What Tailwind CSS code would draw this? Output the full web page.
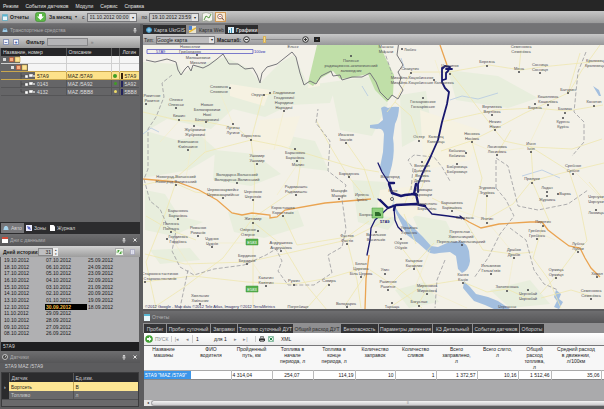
<!DOCTYPE html>
<html lang="ru">
<head>
  <meta charset="utf-8">
  <meta name="viewport" content="width=device-width, initial-scale=1">
  <title>Мониторинг транспорта</title>
  <script src="https://cdn.jsdelivr.net/npm/@tailwindcss/browser@4"></script>
</head>
<body class="h-screen flex flex-col overflow-hidden bg-[#5c5c5e] font-['Liberation_Sans',sans-serif] text-[5px] leading-[6px] text-[#1c1c1c]">
  <!-- Main menu -->
  <nav class="h-[11px] shrink-0 flex items-center gap-[7px] pl-[3px] bg-[#262626] text-[#e4e4e4]">
    <a href="#">Режим</a>
    <a href="#">События датчиков</a>
    <a href="#">Модули</a>
    <a href="#">Сервис</a>
    <a href="#">Справка</a>
  </nav>
  <!-- Report toolbar -->
  <div class="h-[13px] shrink-0 flex items-center bg-linear-to-b from-[#c6c6c6] to-[#9b9b9b] border-b border-[#77777a]">
    <div class="w-[227px] h-full flex items-center pl-[2px] bg-linear-to-b from-[#d2d2d2] to-[#9d9d9d]">
      <button class="flex items-center gap-[2px] w-[33px] font-bold">
        <svg class="w-[6px] h-[7px]" viewBox="0 0 6 7"><path fill="#e9f7fb" stroke="#4ba3bd" stroke-width=".7" d="M.5.5h5v6h-5z"/><path fill="#59b7d3" d="M1 1h4v1.500H1z"/></svg>
        Отчеты
      </button>
      <button class="flex items-center gap-[3px] w-[40px] font-bold whitespace-nowrap">
        <svg class="w-[11px] h-[10px]" viewBox="0 0 11 10"><rect x=".5" y=".5" width="10" height="9" rx="2" fill="#5cb846" stroke="#3d8a2f" stroke-width=".6"/><path fill="#fff" d="M4 2h3v2.500h2L5.500 8 2 4.500h2z"/></svg>
        За месяц
      </button>
      <span class="w-[7px] text-[4px]">▾</span>
      <label class="flex items-center gap-[2px]">с
        <span class="flex h-[9px] w-[50px] border border-[#77777a] bg-[#c6c6c6]">
          <input type="text" value="01.10.2012 00:00" class="w-full min-w-0 pl-[2px]">
          <button class="w-[6px] shrink-0 bg-[#e4e4e4] text-[4px] leading-[7px]">▾</button>
        </span>
      </label>
      <label class="flex items-center gap-[2px] pl-[5px]">по
        <span class="flex h-[9px] w-[50px] border border-[#77777a] bg-[#c6c6c6]">
          <input type="text" value="19.10.2012 23:59" class="w-full min-w-0 pl-[2px]">
          <button class="w-[6px] shrink-0 bg-[#e4e4e4] text-[4px] leading-[7px]">▾</button>
        </span>
      </label>
      <button class="ml-[3px] shrink-0" aria-label="Маршрут">
        <svg class="w-[11px] h-[10px]" viewBox="0 0 11 10"><path fill="#f4f4ee" stroke="#88957b" stroke-width=".5" d="M.5 1.500 4 .5l3.500 1 3-1v8l-3 1-3.500-1-3.500 1z"/><path fill="none" stroke="#5a9b48" d="m2 8 2-4 3 2 2-4"/></svg>
      </button>
      <button class="ml-[2px] shrink-0 border border-[#d09a58] bg-[#f8e8cf]" aria-label="Поиск">
        <svg class="w-[9px] h-[8px]" viewBox="0 0 9 8"><circle cx="4" cy="3.500" r="2.300" fill="#fff" stroke="#704337" stroke-width=".7"/><path stroke="#704337" d="m6 5 2 2.500"/><path stroke="#d0463a" stroke-width=".7" d="M3 3.500h2"/></svg>
      </button>
    </div>
  </div>

  <main class="flex-1 min-h-0 flex gap-[3px]">
    <!-- Left dock -->
    <aside class="w-[140px] shrink-0 flex flex-col">
      <section class="flex-1 min-h-0 flex flex-col">
        <header class="h-[12px] shrink-0 flex items-center gap-[2px] px-[2px] bg-linear-to-b from-[#6e6e70] to-[#565658] text-[#aeaeb0]">
          <svg class="w-[6px] h-[6px]" viewBox="0 0 6 6"><path fill="#9ecbe6" d="M1 2.500 2 1h2l1 1.500.6 2.500H.4z"/><path fill="#33526b" d="M1.500 2.500 2 1.600h2l.5.900z"/></svg>
          <h2 class="flex-1">Транспортные средства</h2>
          <svg class="w-[4px] h-[5px] mr-px" viewBox="0 0 4 5"><path stroke="#e5e5e5" stroke-width=".8" fill="none" d="M1 .5h2M1.300.5v2M2.700.5v2M.5 2.800h3M2 3v2"/></svg>
        </header>
        <div class="h-[12px] shrink-0 flex items-center gap-[3px] pl-[3px] bg-linear-to-b from-[#cecece] to-[#999]">
          <button class="w-[6px] h-[6px] border border-[#8893b4] bg-[#eef1fa] text-[#253a8e] leading-[3px] font-bold">−</button>
          <button class="w-[6px] h-[6px] ml-px border border-[#8893b4] bg-[#eef1fa] text-[#253a8e] leading-[3px] font-bold">+</button>
          <label for="filter" class="pl-[4px] -mr-px font-bold">Фильтр</label>
          <input id="filter" type="text" class="w-[41px] h-[8px] border border-[#88888a] bg-[#b5b5b7]">
          <span class="text-[#77777a]">»</span>
        </div>
        <div class="flex-1 min-h-0 pl-px pr-px bg-[#656567]">
          <table class="w-full table-fixed border-collapse text-[#dededf]">
            <colgroup><col class="w-[65px]"><col class="w-[45px]"><col class="w-[8px]"><col></colgroup>
            <thead>
              <tr class="h-[8px] bg-[#262628] text-left text-[#dedede]">
                <th class="p-0 pl-[2px] font-normal border-r border-[#555]">Название, номер</th>
                <th class="p-0 pl-[2px] font-normal border-r border-[#555]">Описание</th>
                <th class="p-0 border-r border-[#555]"></th>
                <th class="p-0 pl-[3px] font-normal">Логин</th>
              </tr>
            </thead>
            <tbody>
              <tr class="h-[7px] bg-[#f5f5f5] border-b border-[#cfcfcf]">
                <td class="p-0 bg-linear-to-r from-[#656567] from-30% to-[#f5f5f5] to-30%">
                  <svg class="block w-[22px] h-[7px]" viewBox="0 0 22 7"><path fill="#ddd" d="M2 2h3v3H2z"/><path fill="#f4b083" stroke="#c44d26" stroke-width=".6" d="M8.500 1.500h4v4h-4z"/><path fill="#fbe49a" stroke="#b98d29" stroke-width=".5" d="M14 1h5v5h-5z"/></svg>
                </td>
                <td class="p-0 border-l border-[#cfcfcf]"></td><td class="p-0 border-x border-[#cfcfcf]"></td><td class="p-0"></td>
              </tr>
              <tr class="h-[8px] bg-[#f5f5f5]">
                <td class="p-0 bg-linear-to-r from-[#656567] from-42% to-[#f5f5f5] to-42%">
                  <svg class="block w-[30px] h-[7px]" viewBox="0 0 30 7"><path fill="#ddd" d="M10 2h3v3h-3z"/><path fill="#f4b083" stroke="#c44d26" stroke-width=".6" d="M15.500 1.500h4v4h-4z"/><path fill="#fbe49a" stroke="#b98d29" stroke-width=".5" d="M21 1h5v5h-5z"/></svg>
                </td>
                <td class="p-0 border-l border-[#cfcfcf]"></td><td class="p-0 border-x border-[#cfcfcf]"></td><td class="p-0"></td>
              </tr>
              <tr class="h-[8px] bg-[#fde28a] text-[#29251a] border-y border-[#c9a74e]">
                <td class="p-0 bg-linear-to-r from-[#656567] from-53% to-[#fde28a] to-53%"><div class="flex items-center gap-[2px]">
                  <svg class="w-[34px] h-[6px]" viewBox="0 0 34 6"><path stroke="#3a3a3c" stroke-width=".6" d="M20 0v6m0-3h4"/><path fill="#fff" stroke="#555" stroke-width=".4" d="M24 2h3v3h-3zM28 1h4v3h-4z"/><path fill="#eee" stroke="#555" stroke-width=".4" d="M32 2h2v2h-2z"/></svg>57A9</div></td>
                <td class="p-0 pl-px border-l border-[#c9a74e]">MAZ /57A9</td>
                <td class="p-0 border-x border-[#c9a74e]"><i class="block size-[4px] mx-auto rounded-full bg-[#3f9d24]"></i></td>
                <td class="p-0 pl-px"><div class="flex items-center gap-[2px]"><i class="w-[2px] h-[6px] bg-[#372212]"></i>57A9</div></td>
              </tr>
              <tr class="h-[8px] border-b border-[#555557]">
                <td class="p-0"><div class="flex items-center gap-[2px]">
                  <svg class="w-[34px] h-[6px]" viewBox="0 0 34 6"><path stroke="#3a3a3c" stroke-width=".6" d="M20 0v6m0-3h4"/><path fill="#fff" stroke="#555" stroke-width=".4" d="M24 2h3v3h-3zM28 1h4v3h-4z"/><path fill="#eee" stroke="#555" stroke-width=".4" d="M32 2h2v2h-2z"/></svg>0143</div></td>
                <td class="p-0 pl-px border-l border-[#555557]">MAZ /5A92</td>
                <td class="p-0 border-x border-[#555557]"><i class="block size-[3px] mx-auto rounded-full bg-[#3f9d24]"></i></td>
                <td class="p-0 pl-px"><div class="flex items-center gap-[2px]"><i class="w-[2px] h-[6px] bg-[#23235c]"></i>5A92</div></td>
              </tr>
              <tr class="h-[8px] border-b border-[#555557]">
                <td class="p-0"><div class="flex items-center gap-[2px]">
                  <svg class="w-[34px] h-[6px]" viewBox="0 0 34 6"><path fill="none" stroke="#3a3a3c" stroke-width=".6" d="M20 0v3h4"/><path fill="#fff" stroke="#555" stroke-width=".4" d="M24 2h3v3h-3zM28 1h4v3h-4z"/><path fill="#eee" stroke="#555" stroke-width=".4" d="M32 2h2v2h-2z"/></svg>4132</div></td>
                <td class="p-0 pl-px border-l border-[#555557]">MAZ /5BB8</td>
                <td class="p-0 border-x border-[#555557]"><i class="block size-[3px] mx-auto rounded-full bg-[#eedb69]"></i></td>
                <td class="p-0 pl-px"><div class="flex items-center gap-[2px]"><i class="w-[2px] h-[6px] bg-[#23235c]"></i>5BB8</div></td>
              </tr>
            </tbody>
          </table>
        </div>
        <div class="h-[12px] shrink-0 flex items-center pl-px bg-[#2c2c2e] text-[#d5d5d5]">
          <button class="h-[10px] w-[23px] flex items-center gap-[2px] pl-[2px] bg-[#77777a]"><svg class="w-[6px] h-[6px]" viewBox="0 0 6 6"><path fill="#a8d4ec" d="M1 2.500 2 1h2l1 1.500.6 2.500H.4z"/></svg>Авто</button>
          <button class="h-[10px] w-[24px] flex items-center gap-[2px] pl-[2px]"><svg class="w-[6px] h-[6px]" viewBox="0 0 6 6"><path fill="#eef" d="M0 0h6v6H0z"/><path fill="#6470c4" d="m1 1 3 1 1 3-3-1z"/></svg>Зоны</button>
          <button class="h-[10px] flex items-center gap-[2px] pl-[2px]"><svg class="w-[5px] h-[6px]" viewBox="0 0 5 6"><path fill="#fff" d="M0 0h3.500L5 1.500V6H0z"/></svg>Журнал</button>
        </div>
      </section>

      <!-- Days with data -->
      <section class="shrink-0">
        <header class="h-[12px] flex items-center gap-[2px] px-[2px] bg-linear-to-b from-[#6e6e70] to-[#565658] text-[#aeaeb0]">
          <svg class="w-[6px] h-[6px]" viewBox="0 0 6 6"><path fill="#fff" d="M0 0h6v6H0z"/><path fill="#d14a38" d="M0 0h6v2H0z"/></svg>
          <h2 class="flex-1">Дни с данными</h2>
          <svg class="w-[4px] h-[5px] mr-[5px]" viewBox="0 0 4 5"><path stroke="#e5e5e5" stroke-width=".8" fill="none" d="M1 .5h2M1.300.5v2M2.700.5v2M.5 2.800h3M2 3v2"/></svg>
          <svg class="w-[4px] h-[4px] mr-px" viewBox="0 0 4 4"><path stroke="#e5e5e5" d="m.5.5 3 3m0-3-3 3"/></svg>
        </header>
        <div class="h-[11px] flex items-center pl-[3px] bg-linear-to-b from-[#d2d2d2] to-[#9d9d9d]">
          <label for="days" class="w-[35px] font-bold whitespace-nowrap">Дней истории:</label>
          <input id="days" type="text" value="31" class="w-[15px] h-[8px] border border-[#88888a] bg-[#bfbfc1] text-right pr-px">
          <span class="w-[5px] h-[8px] flex flex-col bg-[#eee] text-[3px] leading-[4px] text-center"><button class="h-[4px]">▴</button><button class="h-[4px]">▾</button></span>
          <button class="ml-auto mr-[5px] w-[9px] h-[8px] bg-[#eef5ea] border border-[#aaa]" aria-label="Обновить"><svg class="w-[7px] h-[6px]" viewBox="0 0 7 6"><path fill="none" stroke="#47a33a" stroke-width=".9" d="M.5 3h2V1M6.500 3h-2v2M1.500 2l1-1 1 1M3.500 4l1 1 1-1"/></svg></button>
          <button class="mr-[4px] w-[7px] h-[8px] grid place-items-center" aria-label="Сохранить"><svg class="w-[5px] h-[6px]" viewBox="0 0 5 6"><path fill="#f2f2f6" stroke="#8888ad" stroke-width=".5" d="M.5.500h4v5h-4z"/><path stroke="#6e76ad" stroke-width=".5" d="M1.500 2h2m-2 2h2"/></svg></button>
        </div>
        <div class="h-[85px] mx-px pl-[2px] bg-[#b0b0b2]">
          <ul class="grid grid-flow-col grid-rows-12 grid-cols-[42px_42px_42px] h-20">
            <li class="pl-px">19.10.2012</li><li class="pl-px">18.10.2012</li><li class="pl-px">17.10.2012</li><li class="pl-px">16.10.2012</li><li class="pl-px">15.10.2012</li><li class="pl-px">14.10.2012</li><li class="pl-px">13.10.2012</li><li class="pl-px">12.10.2012</li><li class="pl-px">11.10.2012</li><li class="pl-px">10.10.2012</li><li class="pl-px">09.10.2012</li><li class="pl-px">08.10.2012</li>
            <li class="pl-px">07.10.2012</li><li class="pl-px">06.10.2012</li><li class="pl-px">05.10.2012</li><li class="pl-px">04.10.2012</li><li class="pl-px">03.10.2012</li><li class="pl-px">02.10.2012</li><li class="pl-px">01.10.2012</li><li class="pl-px bg-black text-[#f3bd44] font-bold">30.09.2012</li><li class="pl-px">29.09.2012</li><li class="pl-px">28.09.2012</li><li class="pl-px">27.09.2012</li><li class="pl-px">26.09.2012</li>
            <li class="pl-px">25.09.2012</li><li class="pl-px">24.09.2012</li><li class="pl-px">23.09.2012</li><li class="pl-px">22.09.2012</li><li class="pl-px">21.09.2012</li><li class="pl-px">20.09.2012</li><li class="pl-px">19.09.2012</li><li class="pl-px">18.09.2012</li>
          </ul>
        </div>
        <div class="h-[9px] mx-px pl-[2px] bg-[#1e1e20] text-[#d5d5d5] leading-[9px]">57A9</div>
      </section>

      <!-- Sensors -->
      <section class="shrink-0 h-[58px] flex flex-col">
        <header class="h-[12px] shrink-0 flex items-center gap-[2px] px-[2px] bg-linear-to-b from-[#6e6e70] to-[#565658] text-[#aeaeb0]">
          <svg class="w-[6px] h-[6px]" viewBox="0 0 6 6"><circle cx="3" cy="3" r="2.500" fill="#444" stroke="#ddd" stroke-width=".8"/><path stroke="#eee" stroke-width=".7" d="m3 3.500 1-2"/></svg>
          <h2 class="flex-1">Датчики</h2>
          <svg class="w-[4px] h-[5px] mr-[5px]" viewBox="0 0 4 5"><path stroke="#e5e5e5" stroke-width=".8" fill="none" d="M1 .5h2M1.300.5v2M2.700.5v2M.5 2.800h3M2 3v2"/></svg>
          <svg class="w-[4px] h-[4px] mr-px" viewBox="0 0 4 4"><path stroke="#e5e5e5" d="m.5.5 3 3m0-3-3 3"/></svg>
        </header>
        <div class="h-[9px] shrink-0 pl-[5px] text-[#d0d0d2]">57A9 MAZ /57A9</div>
        <div class="flex-1 mx-px mb-[2px] border border-[#3b3b3d] bg-[#69696b]">
          <table class="w-full table-fixed border-collapse text-[#cbcbcd]">
            <colgroup><col class="w-[7px]"><col class="w-[64px]"><col></colgroup>
            <tr class="h-[9px] bg-[#2b2b2d] text-left"><th class="p-0 border-r border-[#555]"></th><th class="p-0 pl-[2px] font-normal border-r border-[#555]">Датчик</th><th class="p-0 pl-[2px] font-normal">Ед.изм.</th></tr>
            <tr class="h-[9px] bg-[#fde694] text-[#29251a]"><td class="p-0 pl-[2px] bg-[#2b2b2d] text-white">›</td><td class="p-0 pl-[2px] border-r border-[#c9a74e]">Бортсеть</td><td class="p-0 pl-[2px]">В</td></tr>
            <tr class="h-[8px] border-b border-[#505052]"><td class="p-0 bg-[#2b2b2d]"></td><td class="p-0 pl-[2px] border-r border-[#505052]">Топливо</td><td class="p-0 pl-[2px]">л</td></tr>
          </table>
        </div>
      </section>
    </aside>

    <div class="flex-1 min-w-0 flex flex-col">
      <!-- Map tabs -->
      <div class="h-[10px] shrink-0 flex items-end bg-[#737375] text-[#d9d9d9] whitespace-nowrap">
        <button class="h-[9px] w-[43px] flex items-center gap-[2px] pl-[3px] bg-[#2c2c2e]"><svg class="w-[6px] h-[6px] shrink-0" viewBox="0 0 6 6"><circle cx="3" cy="3" r="2.800" fill="#3f9ed2"/><path fill="none" stroke="#d6f1fb" stroke-width=".6" d="M.5 3h5M3 .5v5"/></svg>Карта UkrGIS</button>
        <button class="h-[9px] w-[39px] flex items-center gap-[3px] pl-[3px] bg-[#8e8e90] text-[#2a2a2a]"><svg class="w-[7px] h-[7px] shrink-0" viewBox="0 0 7 7"><path fill="#e9e3cf" d="M0 0h7v7H0z"/><path fill="#4d83d1" d="M0 0h3v4H0z"/><path stroke="#ebb92f" stroke-width="1.500" d="m0 6 7-4"/></svg>Карта Web</button>
        <button class="h-[9px] w-[33px] flex items-center gap-[2px] pl-[3px] bg-[#2c2c2e] font-bold"><svg class="w-[6px] h-[6px] shrink-0" viewBox="0 0 6 6"><path fill="#dff0f8" d="M0 0h6v6H0z"/><path fill="#3c97bd" d="M1 3h1v3H1zM3 1h1v5H3z"/></svg>Графики</button>
      </div>
      <div class="h-[11px] shrink-0 flex items-center pl-px bg-linear-to-b from-[#c8c8c8] to-[#98989a]">
        <label for="map-type" class="w-[12px]">Тип:</label>
        <div class="relative w-[59px] h-[8px]">
          <select id="map-type" class="block w-full h-full border border-[#77777a] bg-[#bdbdbf] appearance-none leading-[6px]"><option>Google карта</option></select>
          <span class="absolute inset-y-px right-px w-[5px] bg-[#e4e4e4] text-center text-[4px] leading-[6px] pointer-events-none">▾</span>
        </div>
        <label for="zoom" class="w-[28px] pl-[2px] font-bold">Масштаб:</label>
        <button class="shrink-0" aria-label="Уменьшить"><svg class="w-[7px] h-[7px]" viewBox="0 0 7 7"><circle cx="3.500" cy="3.500" r="2.800" fill="#ddd" stroke="#333"/><path stroke="#333" d="M2 3.500h3"/></svg></button>
        <span class="w-[50px] h-[7px] flex items-center mx-px">
          <input id="zoom" type="range" min="0" max="20" value="5" class="w-full h-px appearance-none bg-[#88888a] [&::-webkit-slider-thumb]:appearance-none [&::-webkit-slider-thumb]:w-[3px] [&::-webkit-slider-thumb]:h-[7px] [&::-webkit-slider-thumb]:bg-[#f8d983] [&::-webkit-slider-thumb]:border [&::-webkit-slider-thumb]:border-[#d6b25c]">
        </span>
        <button class="shrink-0" aria-label="Увеличить"><svg class="w-[7px] h-[7px]" viewBox="0 0 7 7"><circle cx="3.500" cy="3.500" r="2.800" fill="#ddd" stroke="#333"/><path stroke="#333" d="M2 3.500h3M3.500 2v3"/></svg></button>
        <button class="ml-[5px] w-[6px] h-[5px] bg-[#222] text-white text-[3px] leading-[5px]">▪</button>
      </div>

      <!-- Map, drawn in window coordinates -->
      <div class="flex-1 min-h-0 bg-[#f3f1e8]">
        <svg class="w-full h-full block" viewBox="143 45 461 264" preserveAspectRatio="xMinYMin slice">
          <path fill="#e8eedd" d="M143 62l35 2 5 10 12-8 30-9 25 12 10 14 20-20 14-8 14 30 30-4-8 22-40 2-25 12-32-8-22 20-44-10-24 14zM143 130l34 10 24-4 18 16-30 18-46 8zM215 150l40 4 26 20-30 12-38-6zM330 82l46-6 12 28-16 32-32-6zM145 190l20 4 14 22 24 6-30 14-28-6zM228 212l44 6 26-8 6 16-40 12-30-6zM285 135l30 6 14 30-34-4zM400 95l26-4 6 40-30 16zM448 70l50 6 40 22-30 10-52-8zM352 180l34 2 14 34-12 14-30-8zM412 215l34 6 10 20-30 6zM150 250l40-2 10 12-40 4zM395 290l30-8 14 20-30 6zM490 290l40-10 20 24-40 4z"/>
          <path fill="#f6f2e2" d="M230 84l40 6-6 16-34-10zM310 76l10-10v20l-12 2zM260 120l40-4-10 30-40 6zM420 110l60 20-10 30-46 10zM380 190l36-4 16 18-20 14-36-2z"/>
          <path fill="#c0dfa8" d="M317 45h63l6 14 8 16-1 20-6 7-12-12-7-16-18 4-10 1-7-8-12 7-8 8-5-3z"/>
          <!-- Water -->
          <g fill="#a3bfdf">
            <path d="M381 108q3-3 7 0 5-2 11-1 0 9-4 17l-2 14q2 12-1 27l-3 11-2 6-3-8-4-7 3-15 1-18q-1-6-7-5l-7-1 0-3 8-1 5-4-1-7z"/>
            <path d="M393 203l6 10 6 7 10 9 8 8 8 9 7 1 9-4 13-2q7 2 9 10l1 10q-1 9-8 12l-4-4-2-13-6-4-11 1q-8 2-12-2l-9-8-11-8-6-12-6-12-3-6z"/>
            <path d="M464 281l6 6 6 7 12 3 10 4 12 8-14 1-11-5-11-4-6-7-5-6zM556 290l5 4-2 5 4 3-4 7-5-2 3-6-3-4z"/>
            <path d="M593 86l6 10 2 0-2-6z"/>
          </g>
          <path fill="none" stroke="#b4c9e2" stroke-width=".8" d="M389 178l3 14 2 11M143 134l8-6 8 4M560 178l-18-8-20 6M405 70l-4-12M450 100l12-4 16 3 20-6M362 86l6 10"/>
          <!-- Secondary roads -->
          <path fill="none" stroke="#efe7b0" stroke-width=".8" d="M143 112l34 8 30 2 30 6 14 12 30 6 40 12 34 10 24 4M251 140l-46 12-28 25-34 8M251 140l4 30-2 48 0 90M251 140l12-45 22-3M176 182l-12 35-18 45 10 46M253 218l-30 40-40 30-30 20M253 218l44-30 4-28M253 222l30 24 24 40 20 24M145 254l40 10 62-2 46-10 54-12 44-22M283 215l14 30 50-8 22-16M143 282l50-6 54 6 48 2 34-6 34-10M196 240l-26-10-24-14M223 196l-28-4-18-8M329 283l-22 25M346 304l20-30M347 240l10 40 4 28M316 120l14 26 18 30 18 22M346 142l18 26 10 30M430 157l-8 30-10 12M411 72l-16 30-8 10M411 72l38 0 40-7 32 5 20-3 60-6M450 72l16 20 28 37 10 12 28 6 40 2 30-10M495 129l-24 12-30 10M441 122l54-12 40-2 32 3 36-6M495 129l30-16 43-20 12-40M531 147l2 32-20 25-28 16M531 147l38 24 10 30 8 40-10 10M497 154l14-24M472 142l10 36-10 40M404 206l10-28 24-36M419 140l-8-24-16-14M532 181l30-8 42-10M532 181l18 42M543 224l-10 34 16 22 12 28M578 248l-18 24-20 22M463 218l20 32 30 4 20-2M487 192l-1 26M414 265l20-22M401 247l14 18 12 24-8 14M388 287l14-14 12-8M392 306l30-20 38-6M463 282l24 10 20-3 22 10M370 270l30 20 22 18M404 214l12 30M589 182l15 18M600 45l-18 25-14 24M521 50l-2 20M452 208l-20-10M591 296l-20-6-30 8"/>
          <path fill="none" stroke="#f3ecc4" stroke-width=".6" d="M160 142l20-22 24 4 2 30M194 128l-8 50M219 90l14 34M284 110l-10 40M297 165l-20 30M212 243l40 0M178 215l-2 30 20 30M266 282l-14-20M427 290l40 18M452 208l34 12 28 34M573 170l30 30M470 142l24 10 30-4M548 105l-20 42M435 60l10 30M430 250l-20 50M514 254l-6 34M555 240l-18-8"/>
          <!-- Highways -->
          <path fill="none" stroke="#eaa451" stroke-width="1.300" d="M143 179l34 3 22 8 18 10 15 13 10 2 10-2 18 2v3l7-1 8-7 40-7 46-4M461 217l8 5 12 6 18-4 31-2 12 0 6 8 9 7 12 9 11 2 5 10 6 10 9 9M440 45l7 20M369 255l-3 24-1 30"/>
          <!-- Region borders -->
          <path fill="none" stroke="#77777b" stroke-width="1" d="M146 60l9 2 12-3 9 3 2 8 3 5 4-6 3-3 3 5 2-6 10 3 6-3 8-6 6-5 6 10 9 0 7 5 8-1 4 7 3 8 2-10 5-6 10-3 10-8 5-4 4 5 4 16 4 12 6-4 6 3 5-8 10-5 2 5 7-1 2 5 10-3 10 0 8-4 6 9 4 10 8 8 4-5 6 4 5-9-4-6 2-6-3-6 5-7-6-10 2-14"/>
          <path fill="none" stroke="#9a9a9e" stroke-width=".8" stroke-dasharray="4 2" d="M172 75l-10 8 2 14-8 20-8 12 0 40-4 10 6 22 10 8 8 18 8 4-4 20 8 16 14 8 20-6 30-4 22-10 10-6 6 12-4 10 10 14 26 0 18-12-4-18 14-8 4-18-4-30 4-14-18-14 2-30-14-18 2-14M384 50l8 24M411 190l2-22-5-8 6-5 20 2 8 10 8 14M496 188l10 12 8 16-14 18-12 24-14 20M496 188l0-30 12 8 10 40 20 4 30-6 20-14M586 52l-8 20-4 40 10 10 0 20-12 14M510 228l16 12 8 30 10 14 14 6M445 260l-8 20-2 28M188 270l-8 38"/>
          <!-- Vehicle track -->
          <g fill="none" stroke="#17176e" stroke-linejoin="round" stroke-linecap="round">
            <path stroke-width="1.800" d="M446 69l6 0M442 69l3-3 5 1-2 4-2 2 0 6-3 1M442 68l0 14 3 6 4 4-2 12-5 18-4 18-8 18-7 14-5 12 0 8"/>
            <path stroke-width="2.400" d="M389 184l3 9 9 3 4-1 9-1 2-10M389 183l5 0M388 208l8-3 20-1 9 2M416 194l2 9M412 194l5 1M380 200l8 8M394 210l1-4"/>
            <path stroke-width="1.300" d="M378 163l4 9 7 11M378 199l8 7M424 205l8 9 16 2 14 2M460 216l4 3M394 209l1 11 3 7 4 4M387 209l-12 11-4 8-1 12-3 15"/>
          </g>
          <path fill="none" stroke="#5a5ac4" stroke-width=".8" d="M147 49.500h106v4H147z"/>
          <g font-size="4" fill="#3434b0"><text x="156" y="53">57A9</text><text x="254" y="53">100км</text></g>
          <g fill="#55b04f" stroke="#3d9437" stroke-width=".5"><path d="M246 239h12v6h-12zM246 286h12v6h-12z"/><path fill="#90cf7e" d="M372 208h11v10h-11z"/></g>
          <g font-size="4" fill="#fff" text-anchor="middle"><text x="252" y="244">E583</text><text x="252" y="291">E583</text></g>
          <path fill="#2c6a2a" d="M375 212h4l2 2v2h-6z"/>
          <g id="places" font-size="4" fill="#4c4c52" text-anchor="middle"></g>
          <text x="380" y="223" font-size="4" font-weight="bold" fill="#1a1a78">57A9</text>
          <circle cx="392" cy="199" r="1.500" fill="#fff" stroke="#333" stroke-width=".8"/>
          <text x="145" y="308" font-size="4" fill="#26265c">©2012 Google - Map data ©2012 Tele Atlas, Imagery ©2012 TerraMetrics</text>
        </svg>
      </div>

      <!-- Reports -->
      <section class="shrink-0 h-[100px] flex flex-col pt-[2px]">
        <header class="h-[12px] shrink-0 flex items-center gap-[2px] px-px bg-linear-to-b from-[#6e6e70] to-[#565658] text-[#b5b5b7]">
          <svg class="w-[6px] h-[7px]" viewBox="0 0 6 7"><path fill="#e9f7fb" d="M0 0h6v7H0z"/><path fill="#59b7d3" d="M0 0h6v2H0z"/></svg>
          <h2>Отчеты</h2>
        </header>
        <div class="h-[10px] shrink-0 flex items-end gap-px pl-px bg-[#8f8f91] text-[#d3d3d5] whitespace-nowrap">
          <button class="h-[9px] w-[22px] bg-[#343436]">Пробег</button>
          <button class="h-[9px] w-[43px] bg-[#343436]">Пробег суточный</button>
          <button class="h-[9px] w-[26px] bg-[#343436]">Заправки</button>
          <button class="h-[9px] w-[55px] bg-[#343436]">Топливо суточный ДУТ</button>
          <button class="h-[9px] w-[46px] bg-[#8f8f91] text-[#2a2a2a]">Общий расход ДУТ</button>
          <button class="h-[9px] w-[37px] bg-[#343436]">Безопасность</button>
          <button class="h-[9px] w-[53px] bg-[#343436]">Параметры движения</button>
          <button class="h-[9px] w-[39px] bg-[#343436]">КЗ Детальный</button>
          <button class="h-[9px] w-[46px] bg-[#343436]">События датчиков</button>
          <button class="h-[9px] w-[24px] bg-[#343436]">Обороты</button>
        </div>
        <div class="h-[12px] shrink-0 flex items-center ml-px pl-px bg-linear-to-b from-white to-[#ececec]">
          <button class="flex items-center gap-[2px] w-[26px] text-[#88888a]"><svg class="w-[8px] h-[8px]" viewBox="0 0 8 8"><circle cx="4" cy="4" r="3.800" fill="#42a035"/><path fill="#fff" d="M4 1.500 6.500 4 4 6.500V5H2V3h2z"/></svg>ПУСК</button>
          <button class="w-[11px] border-l border-[#ccc] text-[#88888a]" aria-label="Первая">|◂</button>
          <button class="w-[10px] text-[#88888a]" aria-label="Назад">◂</button>
          <input type="text" value="1" aria-label="Страница" class="w-[22px] h-[8px] border-l border-[#ccc] pl-[3px]">
          <span class="w-[17px]">для 1</span>
          <button class="w-[9px] text-[#88888a]" aria-label="Вперед">▸</button>
          <button class="w-[11px] text-[#88888a]" aria-label="Последняя">▸|</button>
          <button class="ml-[4px] pl-[3px] border-l border-[#ccc]" aria-label="Печать"><svg class="w-[6px] h-[6px]" viewBox="0 0 6 6"><path fill="#333" d="M0 2.500h6V5H0z"/><path fill="#bbb" stroke="#333" stroke-width=".5" d="M1.500.5h3v2h-3zM1 4h4v1.500H1z"/></svg></button>
          <button class="ml-[3px]" aria-label="Экспорт"><svg class="w-[6px] h-[6px]" viewBox="0 0 6 6"><path fill="#dff1e4" stroke="#4a9a76" stroke-width=".6" d="M.5.5h5v5h-5z"/><path stroke="#2a8250" d="m1.500 1.500 3 3m0-3-3 3"/></svg></button>
          <button class="ml-[7px]">XML</button>
        </div>
        <div class="flex-1 min-h-0 ml-px border-t border-[#77777a] bg-[#aaaaac]">
          <table class="w-full table-fixed border-collapse bg-white">
            <colgroup><col class="w-[47px]"><col class="w-[40px]"><col class="w-[41px]"><col class="w-[41px]"><col class="w-[42px]"><col class="w-[40px]"><col class="w-[41px]"><col class="w-[41px]"><col class="w-[41px]"><col class="w-[33px]"><col class="w-[50px]"><col></colgroup>
            <thead>
              <tr class="h-[24px] align-top bg-[#f7f7f7] border-b border-[#aaa] leading-[6px]">
                <th class="p-0 pr-[8px] font-normal">Название<br>машины</th>
                <th class="p-0 font-normal">ФИО<br>водителя</th>
                <th class="p-0 font-normal">Пройденный<br>путь, км</th>
                <th class="p-0 font-normal">Топлива в<br>начале<br>периода, л</th>
                <th class="p-0 font-normal">Топлива в<br>конце<br>периода, л</th>
                <th class="p-0 font-normal">Количество<br>заправок</th>
                <th class="p-0 font-normal">Количество<br>сливов</th>
                <th class="p-0 font-normal">Всего<br>заправлено,<br>л</th>
                <th class="p-0 font-normal">Всего слито,<br>л</th>
                <th class="p-0 font-normal">Общий<br>расход<br>топлива,<br>л</th>
                <th class="p-0 font-normal whitespace-nowrap">Средний расход<br>в движении,<br>л/100км</th>
                <th class="p-0"></th>
              </tr>
            </thead>
            <tbody>
              <tr class="h-[9px] text-right border-b border-[#888]">
                <td class="p-0 pl-px text-left whitespace-nowrap bg-[#3b96ea] text-white">57A9 "MAZ /57A9"</td>
                <td class="p-0 border-r border-[#bbb]"></td>
                <td class="p-0 pl-px text-left border-r border-[#bbb]">4 314,04</td>
                <td class="p-0 pr-[13px] border-r border-[#bbb]">254,07</td>
                <td class="p-0 pr-px border-r border-[#bbb]">114,19</td>
                <td class="p-0 pr-px border-r border-[#bbb]">10</td>
                <td class="p-0 pr-px border-r border-[#bbb]">1</td>
                <td class="p-0 pr-px border-r border-[#bbb]">1 372,57</td>
                <td class="p-0 pr-px border-r border-[#bbb]">10,16</td>
                <td class="p-0 pr-px border-r border-[#bbb]">1 512,46</td>
                <td class="p-0 pr-px border-r border-[#bbb]">35,06</td>
                <td class="p-0"></td>
              </tr>
            </tbody>
          </table>
        </div>
        <div class="h-[6px] shrink-0 ml-px mb-[3px] flex items-center bg-[#e6e6e6]">
          <button class="w-[7px] text-[4px] leading-[6px]" aria-label="Влево">◂</button>
          <div class="flex-1 h-[6px] rounded-l-sm border-y border-l border-[#a5a5a7] bg-linear-to-b from-[#f3f3f3] to-[#cbcbcd] pl-[60px] text-center text-[4px] leading-[4px] text-[#666]">≡</div>
        </div>
      </section>
    </div>
  </main>

  <script>
    // [x, y of first line, dot dx, dot dy, lines...]; no dot when dx is null
    const places = [
      [190, 48, null, 0, 'Новоселки', 'Грибоедово'], [198, 59, -1, -4, 'Милошевичи', 'Михалки'], [293, 48, null, 0, 'Ельск'],
      [219, 88, 11, 0, 'Словечно', 'Словечне'], [257, 96, 7, -1, 'Овруч'], [284, 94, -14, -1, 'Гладковичи', 'Гладковичі'],
      [284, 104, 0, 7, 'Народичи', 'Народичі'], [176, 101, 0, 7, 'Олевск', 'Олевськ'], [152, 97, -6, 7, 'Рокитное', 'Рокитне'],
      [207, 106, -1, 16, 'Новые', 'Белокоровичи', 'Нові', 'Білокоровичі'], [179, 117, 0, 3, 'Кишин'], [195, 131, -1, -5, 'Жубровичи', 'Жубровичі'],
      [233, 129, 0, -5, 'Лугины', 'Лугини'], [251, 137, 0, 3, 'Коростень'], [188, 143, 0, 7, 'Емильчино', 'Ємільчине'],
      [257, 157, 0, 7, 'Ушомир', 'Ушомир'], [295, 154, 0, -5, 'Барановка', 'Баранівка'], [298, 166, -1, -5, 'Малин'],
      [346, 136, 0, 7, 'Иванков', 'Іванків'], [349, 175, 0, 2, 'Бородянка'], [176, 178, 0, 7, 'Новоград-Волынский', 'Новоград-Волинський'],
      [237, 176, 0, 7, 'Володарск-Волынский', 'Володарськ-Волинський'], [351, 62, 0, -6, 'Полесье', 'радиационно-экологический', 'заповедник'],
      [386, 48, null, 0, 'Масаны', 'Масани'], [410, 51, -8, -2, 'Любеч'], [410, 70, 1, 3, 'Славутич'],
      [412, 79, 22, 1, 'Михайло-Коцюбинское', 'Михайло-Коцюбинське'], [423, 103, 0, -5, 'Гончаровское', 'Гончарівське'], [450, 67, 0, 7, 'Чернигов'],
      [444, 84, null, 0, 'Количевка'], [487, 63, 0, 3, 'Березна'], [519, 70, 0, 2, 'Мена'], [540, 66, 0, 7, 'Сосница', 'Сосниця'],
      [521, 48, null, 0, 'Семеновка', 'Семенівка'], [568, 91, 0, 2, 'Батурин'], [535, 109, 0, -5, 'Борзна'], [548, 98, 0, 7, 'Кошелевка', 'Кошелівка'],
      [565, 110, 0, 3, 'Бахмач'], [563, 123, 0, -5, 'Курень', 'Курінь'], [594, 103, 0, 3, 'Конотоп'], [595, 62, null, 0, 'Кролевец', 'Кролевець'],
      [492, 108, 0, 7, 'Вертиевка', 'Вертіївка'], [495, 123, 0, 7, 'Нежин', 'Ніжин'], [472, 135, 0, 7, 'Носовка', 'Носівка'], [419, 138, 0, 3, 'Остер'],
      [436, 138, null, 0, 'Козелец', 'Козелець'], [457, 152, 9, 1, 'Кобыжча', 'Кобижча'], [457, 168, 0, -4, 'Бобровица', 'Бобровиця'],
      [497, 148, 0, 7, 'Лосиновка', 'Лосинівка'], [531, 145, 0, 7, 'Ичня', 'Ічня'], [532, 180, 0, 3, 'Прилуки'], [573, 167, 0, 7, 'Сребное', 'Срібне'],
      [390, 178, null, 0, 'Вышгород'], [422, 167, 0, -5, 'Великая', 'Дымерка', 'Велика', 'Димерка'],
      [223, 191, 0, 7, 'Червоноармейск', 'Червоноармійськ'], [253, 193, 0, 7, 'Черняхов', 'Черняхів'], [296, 188, 0, 7, 'Радомышль', 'Радомишль'],
      [339, 192, 0, 7, 'Макаров', 'Макарів'], [362, 196, null, 0, 'Ирпень', 'Ірпінь'], [283, 209, 0, 7, 'Коростышев', 'Коростишів'],
      [253, 220, 0, 3, 'Житомир'], [178, 212, 0, 7, 'Барановка', 'Баранівка'], [171, 225, 0, 7, 'Полянка', 'Полянка'], [198, 229, 0, 7, 'Романов', 'Романів'],
      [178, 238, -11, 1, 'Гордиевка', 'Гордіївка'], [212, 240, 0, 7, 'Чуднов', 'Чуднів'], [248, 231, 10, 0, 'Озёрное', 'Озерне'],
      [281, 244, 0, 7, 'Андрушевка', 'Андрушівка'], [247, 257, 0, 7, 'Бердичев', 'Бердичів'], [347, 237, 0, 7, 'Фастов', 'Фастів'],
      [366, 216, null, 0, 'Боярка'], [361, 265, 0, 12, 'Белая', 'Церковь', 'Біла Церква'], [266, 279, 0, 7, 'Казатин', 'Козятин'],
      [294, 282, 0, 3, 'Ружин'], [329, 282, 0, 3, 'Сквира'], [346, 305, 1, 2, 'Володарка'], [298, 308, null, 0, 'Погребище'],
      [200, 297, 0, 7, 'Хмельник', 'Хмільник'], [160, 275, -15, 7, 'Староконстантинов', 'Старокостянтинів'],
      [393, 192, null, 0, 'Киев'], [424, 191, null, 0, 'Бровары', 'Бровари'], [427, 205, null, 0, 'Борисполь', 'Бориспіль'],
      [487, 189, 0, 7, 'Згуровка', 'Згурівка'], [452, 204, 0, 7, 'Барышевка', 'Баришівка'], [465, 219, null, 0, 'Березань'], [487, 220, 0, 3, 'Яготин'],
      [547, 189, 0, 3, 'Ладан'], [547, 201, 0, -5, 'Журавка'], [565, 195, -7, -1, 'Варва'], [543, 223, 0, 3, 'Пирятин'], [537, 232, 0, 7, 'Гребенка', 'Гребінка'],
      [578, 245, 0, 7, 'Лубны', 'Лубни'], [461, 233, 1, 12, 'Переяслав -', 'Хмельницкий', 'Переяслав-Хмельницький'], [401, 244, 0, -5, 'Обухов', 'Обухів'],
      [409, 229, null, 0, 'Украинка', 'Українка'], [376, 236, 0, -4, 'Васильков', 'Васильків'], [514, 251, 0, 7, 'Драбов', 'Драбів'],
      [414, 262, 0, 7, 'Кагарлык', 'Кагарлик'], [491, 267, 0, 7, 'Гельмязов', "Гельм'язів"], [556, 271, 0, 7, 'Оржица', 'Оржиця'],
      [463, 276, 0, 7, 'Канев', 'Канів'], [385, 271, 0, 3, 'Узин'], [388, 283, 0, 7, 'Ракитное', 'Ракитне'], [427, 287, 0, 7, 'Мироновка', 'Миронівка'],
      [507, 288, 0, 3, 'Золотоноша'], [528, 295, 0, -5, 'Чернобай', 'Чорнобай'], [591, 292, 0, 7, 'Семеновка', 'Семенівка'],
      [419, 303, 0, 3, 'Богуслав'], [392, 308, 0, -5, 'Тараща'], [507, 308, null, 0, 'Черкассы'], [597, 275, 0, 2, 'Хорол'],
      [596, 198, null, 0, 'Чернухи', 'Чорнухи'], [596, 214, 0, -4, 'Лохвица']
    ];
    document.getElementById('places').innerHTML = places.map(([x, y, dx, dy, ...lines]) =>
      lines.map((line, i) => `<text x="${x}" y="${y + i * 5}">${line}</text>`).join('') +
      (dx === null ? '' : `<circle cx="${x + dx}" cy="${y + dy}" r="1" fill="#44444a"/>`)
    ).join('');
  </script>
</body>
</html>
